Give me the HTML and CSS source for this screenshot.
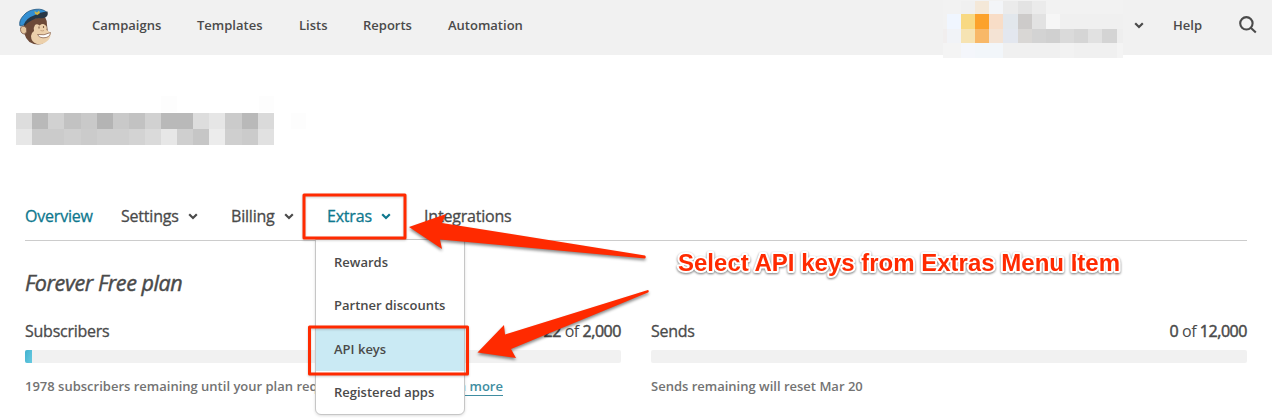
FILE: index.html
```html
<!DOCTYPE html>
<html lang="en">
<head>
<meta charset="utf-8">
<title>Account overview</title>
<link rel="stylesheet" href="styles.css">
</head>
<body>
<header class="topbar">
  <svg class="logo" width="34" height="38" viewBox="0 0 34 38">
    <path d="M5 17 L10 11 L26 9 Q28 12 28 17 L29 25 Q29 36 19 36.500 Q8 36 5.500 26Z" fill="#6d4a38"/>
    <path d="M16 17 Q18 15.500 20.500 17.500 Q24 15 26 17 Q28.500 18 27.500 22 Q30 23 31.500 25 Q32 31 27 34 Q23 37 18 36 Q12 34 12 28 Q12 25 15 23 Q14 20 16 17Z" fill="#ecd0ab"/>
    <path d="M5.500 18.500 Q1.500 17.500 1.500 21.500 Q1.800 26 6 26 Q8.500 24 7.500 20Z" fill="#e4c6a0" stroke="#765342" stroke-width=".8"/>
    <path d="M1 18 Q-.5 13 4.500 7.500 Q9 2 17 1.300 Q24 .5 28 4.500 L24 8 Q14 8 8 12.500 L5 17Z" fill="#338fd2" stroke="#24577f" stroke-width=".8"/>
    <path d="M4.500 17.500 Q7 10 15 7.500 Q21 4 28.500 3.500 Q29.500 7 27 9 Q24 11 20 10 Q12 11 6 17.500Z" fill="#273746"/>
    <path d="M15.500 3 L18 4.500 L20 2.500 L21 5 L18.500 7 L16 6Z" fill="#cdb548"/>
    <path d="M20 18.500 v2 M24.500 18 v2" stroke="#806047" stroke-width="1.1"/>
    <path d="M21.500 22.500 q2 .8 3.500 0" fill="none" stroke="#bb9572" stroke-width=".8"/>
    <path d="M18.500 26.500 Q25 28 31.500 24.500 Q31 30 24 29.800 Q20 30 18.500 26.500Z" fill="#fff" stroke="#8b6650" stroke-width=".8"/>
  </svg>
  <nav class="main-nav"><a class="campaigns">Campaigns</a><a class="templates">Templates</a><a class="lists">Lists</a><a class="reports">Reports</a><a class="automation">Automation</a></nav>
  <div class="account">
    <svg class="account-name" width="180" height="58" shape-rendering="crispEdges">
      <path fill="#f2f2f2" d="M0 0H180V58H0z"/>
      <path fill="#f0f0f0" d="M18 1h14v13H18zM117 14h63v15H117zM103 14h14v15h-14z"/>
      <path fill="#f4e8d8" d="M32 1h14v13H32z"/><path fill="#f3f5f8" d="M46 1h14v13H46z"/>
      <path fill="#ebebeb" d="M60 1h15v13H60zM89 1h14v13H89z"/><path fill="#e3e3e3" d="M75 1h14v13H75z"/>
      <path fill="#f0f6ff" d="M4 14h14v15H4z"/><path fill="#f8d983" d="M18 14h14v15H18z"/><path fill="#fca22b" d="M32 14h14v15H32z"/><path fill="#f8ddc7" d="M46 14h14v15H46z"/><path fill="#e2e7ec" d="M60 14h15v15H60z"/><path fill="#cdcbca" d="M75 14h14v15H75z"/><path fill="#e2e2e2" d="M89 14h14v15H89z"/><path fill="#f6f6f6" d="M103 14h14v15h-14z"/>
      <path fill="#f1eeee" d="M0 29h4v14H0z"/><path fill="#f1f3f7" d="M4 29h14v14H4z"/><path fill="#f6e3b3" d="M18 29h14v14H18z"/><path fill="#f8b868" d="M32 29h14v14H32z"/><path fill="#f4e3d4" d="M46 29h14v14H46z"/><path fill="#e3e7ef" d="M60 29h15v14H60z"/><path fill="#d9d7d5" d="M75 29h14v14H75z"/><path fill="#d3d3d3" d="M89 29h14v14H89z"/><path fill="#d0d0d0" d="M103 29h14v14h-14z"/><path fill="#dadada" d="M117 29h14v14h-14z"/><path fill="#d5d5d5" d="M131 29h14v14h-14z"/><path fill="#e1e1e1" d="M145 29h14v14h-14z"/><path fill="#d4d4d4" d="M159 29h15v14h-15z"/><path fill="#eee" d="M174 29h6v14h-6z"/>
      <path fill="#f4f4f4" d="M0 43h18v15H0zM174 43h6v15h-6z"/><path fill="#f4f6fb" d="M18 43h14v15H18z"/><path fill="#f2f6fa" d="M32 43h28v15H32z"/><path fill="#f0f0f0" d="M60 43h57v15H60zM131 43h43v15h-43z"/>
    </svg>
    <svg class="account-caret chev" width="10" height="7" viewBox="0 0 10 7"><path d="M1.2 1.3 5 5 8.8 1.3"/></svg>
    <a class="help">Help</a>
    <svg class="search" width="18" height="18" viewBox="0 0 18 18"><circle cx="7.400" cy="7.300" r="6.200"/><path d="M12 12 16.800 16.600"/></svg>
  </div>
</header>
<main class="page">
  <svg class="account-title" width="304" height="64" shape-rendering="crispEdges">
    <path fill="#fdfdfd" d="M145 15h16v16h-16zM243 15h15v16h-15zM275 32h15v16h-15z"/>
    <path fill="#ddd" d="M0 32h16v16H0zM177 32h16v16h-16z"/><path fill="#b9b9b9" d="M16 32h16v16H16zM145 32h32v16h-32zM226 32h16v16h-16z"/><path fill="#d1d1d1" d="M32 32h16v16H32zM129 32h16v16h-16z"/><path fill="#c2c2c2" d="M48 32h17v16H48zM113 32h16v16h-16z"/><path fill="#c9c9c9" d="M65 32h16v16H65zM97 32h16v16H97z"/><path fill="#b4b4b4" d="M81 32h16v16H81z"/><path fill="#e6e6e6" d="M193 32h16v16h-16z"/><path fill="#cbcbcb" d="M209 32h17v16h-17z"/><path fill="#dadada" d="M242 32h16v16h-16z"/>
    <path fill="#e7e7e7" d="M0 48h16v16H0zM145 48h16v16h-16z"/><path fill="#cbcbcb" d="M16 48h32v16H16zM65 48h16v16H65zM226 48h16v16h-16z"/><path fill="#cfcfcf" d="M48 48h17v16H48zM81 48h32v16H81zM161 48h16v16h-16zM209 48h17v16h-17z"/><path fill="#d3d3d3" d="M113 48h16v16h-16z"/><path fill="#dadada" d="M129 48h16v16h-16z"/><path fill="#c6c6c6" d="M177 48h16v16h-16z"/><path fill="#ececec" d="M193 48h16v16h-16z"/><path fill="#e1e1e1" d="M242 48h16v16h-16z"/>
  </svg>
  <nav class="tabs">
    <a class="tab active overview">Overview</a>
    <a class="tab"><span class="settings">Settings</span><svg class="chev" width="10" height="7" viewBox="0 0 10 7"><path d="M1.2 1.3 5 5 8.8 1.3"/></svg></a>
    <a class="tab"><span class="billing">Billing</span><svg class="chev" width="10" height="7" viewBox="0 0 10 7"><path d="M1.2 1.3 5 5 8.8 1.3"/></svg></a>
    <a class="tab active"><span class="extras">Extras</span><svg class="chev" width="10" height="7" viewBox="0 0 10 7"><path d="M1.2 1.3 5 5 8.8 1.3"/></svg></a>
    <a class="tab integrations">Integrations</a>
  </nav>
  <h1 class="plan">Forever Free plan</h1>
  <div class="usage">
    <section class="meter">
      <div class="meter-head"><span class="subs">Subscribers</span><span class="count"><b>22</b> of <b>2,000</b></span></div>
      <div class="track"><div class="fill"></div></div>
      <p class="note">1978 subscribers remaining until your plan requires payment. <a class="more">Learn more</a></p>
    </section>
    <section class="meter">
      <div class="meter-head"><span class="sends">Sends</span><span class="count"><b>0</b> of <b>12,000</b></span></div>
      <div class="track"></div>
      <p class="note reset">Sends remaining will reset Mar 20</p>
    </section>
  </div>
</main>
<div class="dropdown"><a>Rewards</a><a>Partner discounts</a><a class="selected">API keys</a><a>Registered apps</a></div>
<svg class="annotations" width="1272" height="418">
  <g class="frames"><rect x="304" y="195" width="101" height="43"/><rect x="309.500" y="327" width="158" height="47"/></g>
  <g class="arrows">
    <path d="M409 227 446 214 442 223 645 255.500Q646.500 257 645 258.500L440 239.500 442 249Z"/>
    <path d="M477.500 352.500 504 325 505 334.500 648 290Q649.500 291 648 292.500L511 349 516 358Z"/>
  </g>
  <text class="callout" x="678" y="271" textLength="442" lengthAdjust="spacing">Select API keys from Extras Menu Item</text>
</svg>
</body>
</html>
```
FILE: styles.css
```css
* { box-sizing: border-box; }
body { margin: 0; width: 1272px; height: 418px; overflow: hidden; position: relative; background: #fff; color: #4a4a4a; font-family: "Open Sans", sans-serif; font-size: 16px; }
.topbar { height: 55px; background: #f1f1f1; display: flex; align-items: flex-start; font-size: 13px; font-weight: 600; line-height: 18px; }
.logo { margin: 8px 0 0 19px; flex: none; }
.main-nav { display: grid; grid-template-columns: 105px 102px 64px 85px 90px; margin: 16px 0 0 39px; white-space: nowrap; }
.account { margin-left: auto; display: flex; width: 329px; flex: none; }
.account-name { flex: none; }
.chev { fill: none; stroke: currentColor; stroke-width: 2.2; flex: none; }
.account-caret { margin: 22px 0 0 11px; }
.help { margin: 16px 0 0 29px; width: 66px; }
.search { margin-top: 16px; fill: none; stroke: #4a4a4a; stroke-width: 2.1; flex: none; }
.page { padding: 26px 25px 0; }
.account-title { display: block; margin-left: -9px; }
.tabs { display: grid; grid-template-columns: 96px 110px 96px 97px 120px; align-items: center; height: 48px; margin-top: 48px; border-bottom: 1px solid #ccc; -webkit-text-stroke: 0.3px currentColor; letter-spacing: -0.2px; white-space: nowrap; }
.tab { display: flex; align-items: center; line-height: 20px; padding-bottom: 1px; }
.tab.active { color: #0e788e; }
.settings { width: 67px; }
.billing { width: 53px; }
.extras { width: 54px; }
.plan { margin: 28px 0 0; font-size: 21.5px; font-style: italic; font-weight: 400; line-height: 28px; letter-spacing: -0.42px; -webkit-text-stroke: 0.45px currentColor; }
.usage { display: grid; grid-template-columns: 596px 596px; gap: 30px; margin-top: 24px; }
.meter-head { display: flex; justify-content: space-between; line-height: 20px; letter-spacing: -0.25px; }
.subs, .sends { -webkit-text-stroke: 0.3px currentColor; }
.count { letter-spacing: -0.45px; }
.count b { font-weight: 400; -webkit-text-stroke: 0.5px currentColor; }
.track { height: 13px; margin-top: 9px; border-radius: 2px; background: #f1f1f1; overflow: hidden; }
.fill { width: 7px; height: 13px; background: linear-gradient(110deg, #42b2cf, #68cae1); }
.note { margin: 14px 0 0; font-size: 13px; line-height: 18px; font-weight: 600; color: #737373; white-space: nowrap; }
.more { display: inline-block; margin-left: 15px; color: #408da1; border-bottom: 1px solid #408da1; }
.dropdown { position: absolute; left: 315px; top: 239px; width: 150px; height: 176px; border: 1px solid #c6c6c6; border-radius: 0 0 6px 6px; background: #fff; box-shadow: 0 1px 3px #0002; font-size: 13px; font-weight: 600; display: grid; grid-template-rows: 43px 44px 43px 43px; padding-top: 1px; }
.dropdown a { padding-left: 18px; line-height: 43px; white-space: nowrap; }
.dropdown .selected { background: #caeaf4; }
.annotations { position: absolute; left: 0; top: 0; }
.frames { fill: none; stroke: #ff2a00; stroke-width: 3; stroke-linejoin: round; filter: drop-shadow(0 1px 1px #0003); }
.arrows { fill: #ff2a00; filter: drop-shadow(0 2px 1.5px #0007); }
.callout { font: bold 24px "Liberation Sans", sans-serif; fill: #ff2a00; stroke: #fff; stroke-width: 4px; stroke-linejoin: round; paint-order: stroke; filter: drop-shadow(0 1.5px 1px #0008); }
```
